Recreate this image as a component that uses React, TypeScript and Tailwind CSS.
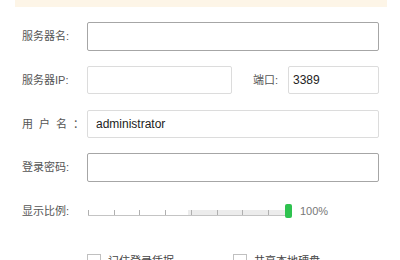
import React from "react";

const font = { fontFamily: '"Liberation Sans", "Noto Sans CJK SC", sans-serif' };

function Label({ children }: { children: React.ReactNode }) {
  return <div className="w-[65px] shrink-0 text-[11px] text-[#555]">{children}</div>;
}

export default function App() {
  const ticks = [0, 1, 2, 3, 4, 5, 6, 7];
  return (
    <div
      className="w-[400px] h-[260px] overflow-hidden bg-white flex flex-col"
      style={font}
    >
      <div className="mx-[15px] w-[372px] h-[7px] bg-[#fdf5e7] shrink-0" />

      <div className="flex flex-col pl-[22px] pr-[21px] pt-[15px]">
        <div className="flex items-center h-[29px]">
          <Label>服务器名:</Label>
          <input
            className="flex-1 h-full border border-[#a6a6a6] rounded-[2px] px-[8px] text-[12px] text-[#222] outline-none"
            defaultValue=""
          />
        </div>

        <div className="flex items-center h-[28px] mt-[15px]">
          <Label>服务器IP:</Label>
          <input
            className="w-[145px] h-full border border-[#dcdcdc] rounded-[2px] px-[8px] text-[12px] text-[#222] outline-none"
            defaultValue=""
          />
          <div className="ml-[21px] w-[35px] text-[11px] text-[#555]">端口:</div>
          <input
            className="w-[91px] h-full border border-[#dcdcdc] rounded-[2px] px-[4px] text-[12px] text-[#222] outline-none"
            defaultValue="3389"
          />
        </div>

        <div className="flex items-center h-[28px] mt-[16px]">
          <Label>
            <span className="tracking-[6px]">用户名</span>：
          </Label>
          <input
            className="flex-1 h-full border border-[#dcdcdc] rounded-[2px] px-[8px] text-[12px] text-[#222] outline-none"
            defaultValue="administrator"
          />
        </div>

        <div className="flex items-center h-[29px] mt-[15px]">
          <Label>登录密码:</Label>
          <input
            type="password"
            className="flex-1 h-full border border-[#a6a6a6] rounded-[2px] px-[8px] text-[12px] text-[#222] outline-none"
            defaultValue=""
          />
        </div>

        <div className="flex items-center h-[14px] mt-[22px]">
          <Label>显示比例:</Label>
          <div className="relative w-[197px] h-[8px] mt-[1px] border-b border-[#c4c4c4] ml-[1px]">
            <div className="absolute left-[100px] right-0 bottom-0 h-[5px] bg-[#ececec]" />
            <div className="relative flex justify-between items-end w-[181px] h-full">
              {ticks.map((t) => (
                <div key={t} className="w-px h-[5px] bg-[#b0b0b0]" />
              ))}
            </div>
          </div>
          <div className="w-[7px] h-[14px] rounded-[2px] bg-[#2ec24f]" />
          <span className="ml-[8px] text-[11px] text-[#777]">100%</span>
        </div>

        <div className="flex items-center mt-[35px] pl-[65px]">
          <div className="flex items-center w-[146px]">
            <div className="w-[14px] h-[14px] border border-[#c0c0c0] bg-white" />
            <span className="ml-[7px] text-[11px] text-[#444]">记住登录凭据</span>
          </div>
          <div className="flex items-center">
            <div className="w-[14px] h-[14px] border border-[#c0c0c0] bg-white" />
            <span className="ml-[7px] text-[11px] text-[#444]">共享本地硬盘</span>
          </div>
        </div>
      </div>
    </div>
  );
}
